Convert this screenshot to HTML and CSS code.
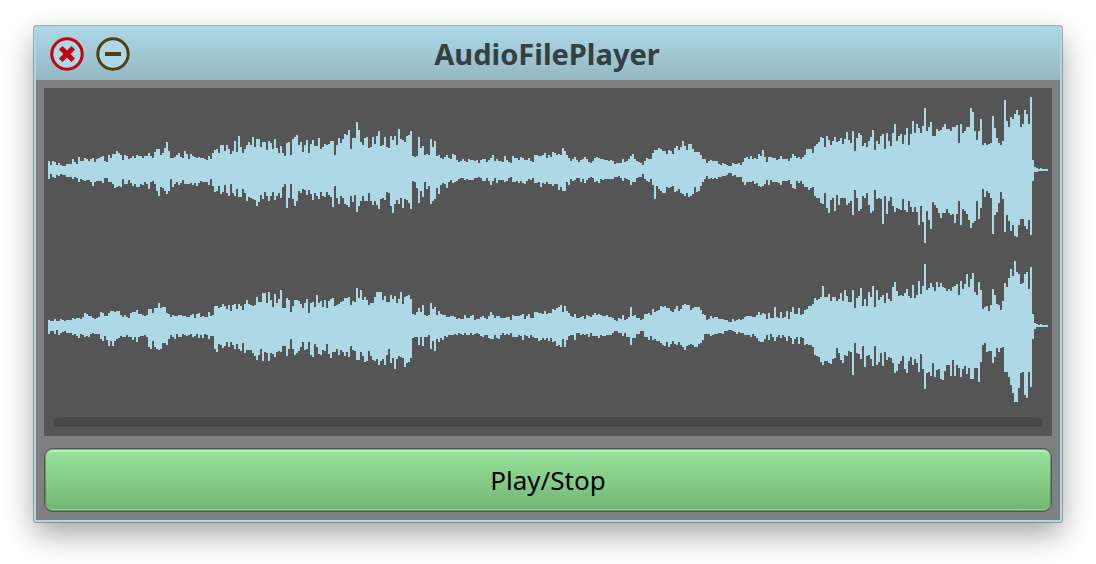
FILE: index.html
```
<!DOCTYPE html>
<html lang="en">
<head>
<meta charset="utf-8">
<title>AudioFilePlayer</title>
<link rel="stylesheet" href="styles.css">
</head>
<body>
<main class="window">
  <header class="titlebar">
    <div class="window-controls">
      <button class="control" type="button" aria-label="Close">
        <svg class="control-icon" viewBox="0 0 34 34" aria-hidden="true">
          <circle cx="17" cy="17" r="15.200" fill="#add8e6" stroke="#c4000f" stroke-width="3"/>
          <path d="M10.700 10.700L23.300 23.300M23.300 10.700L10.700 23.300" stroke="#c4000f" stroke-width="5"/>
        </svg>
      </button>
      <button class="control" type="button" aria-label="Minimise">
        <svg class="control-icon" viewBox="0 0 34 34" aria-hidden="true">
          <circle cx="17" cy="17" r="15.200" fill="#add8e6" stroke="#51400b" stroke-width="3"/>
          <path d="M9 17H25" stroke="#51400b" stroke-width="4"/>
        </svg>
      </button>
    </div>
    <h1 class="title">AudioFilePlayer</h1>
  </header>
  <div class="content">
    <section class="thumbnail" aria-label="Waveform">
      <svg class="channel" viewBox="0 0 1000 156" preserveAspectRatio="none" role="img" aria-label="Left channel"><path class="wave" id="left"/></svg>
      <svg class="channel" viewBox="0 0 1000 156" preserveAspectRatio="none" role="img" aria-label="Right channel"><path class="wave" id="right"/></svg>
      <div class="scrollbar"></div>
    </section>
    <button class="play" type="button">Play/Stop</button>
  </div>
</main>
<script src="waveform.js"></script>
</body>
</html>
```

FILE: styles.css
```
* {
  box-sizing: border-box;
}

body {
  min-height: 100vh;
  margin: 0;
  padding: 26px 34px;
  background: #fff;
  font-family: "Noto Sans", "Open Sans", sans-serif;
}

.window {
  border: 2px solid #add8e6;
  border-top: 0;
  border-radius: 2px;
  background: #808080;
  box-shadow: 0 0 0 1px rgba(0, 0, 0, 0.28), 0 12px 30px rgba(0, 0, 0, 0.36);
}

.titlebar {
  display: grid;
  grid-template-columns: 1fr auto 1fr;
  align-items: center;
  height: 54px;
  padding: 2px 16px 0 14px;
  background: linear-gradient(#add8e6, #93b8c3);
}

.window-controls {
  display: flex;
  gap: 12px;
}

.control {
  width: 34px;
  height: 34px;
  padding: 0;
  border: 0;
  background: none;
}

.control-icon {
  display: block;
  width: 100%;
  fill: none;
}

.title {
  margin: 0;
  color: #344144;
  font-size: 29px;
  font-weight: 700;
  line-height: 40px;
}

.content {
  display: flex;
  flex-direction: column;
  gap: 12px;
  padding: 8px;
}

.thumbnail {
  padding: 4px 4px 8px;
  background: #555;
}

.channel {
  display: block;
  width: 100%;
  height: 156px;
}

.wave {
  fill: #add8e6;
  shape-rendering: crispEdges;
}

.scrollbar {
  height: 12px;
  margin: 12px 4px 0;
  border: 1px solid #5b5b5b;
  border-radius: 6px;
  background: #494949;
}

.play {
  width: 100%;
  height: 64px;
  padding: 0;
  border: 1px solid #505650;
  border-radius: 9px;
  background: linear-gradient(#98e49c, #70b573);
  box-shadow: inset 0 0 0 1px rgba(70, 100, 70, 0.5), inset 0 3px 0 rgba(205, 245, 205, 0.65), inset 0 -2px 0 rgba(160, 225, 160, 0.7);
  color: #000;
  font-family: inherit;
  font-size: 26px;
  line-height: 36px;
}
```

FILE: waveform.js
```
// Peak heights above and below the centre line, two pixels per column.
// Each block starts at the matching column of BLOCK_STARTS.
const BLOCK_STARTS = [0, 126, 251, 376];
const CENTRE = 78;

const channels = {
  left: {
    up: [
      "9 5 9 8 5 7 5 4 4 6 6 6 11 8 6 13 9 9 12 11 9 11 12 8 11 12 13 14 9 8 15 12 16 16 19 17 15 10 15 14 11 12 14 12 15 14 14 12 14 14 17 14 12 18 21 21 15 17 22 28 19 12 12 13 15 17 13 12 19 16 11 16 14 13 12 13 12 12 11 10 14 11 17 20 21 17 25 25 19 25 21 16 19 29 18 34 23 17 21 25 28 25 33 23 31 31 23 28 28 20 29 27 21 31 22 17 24 17 14 27 28 15 31 33 35 25",
      "28 18 25 30 17 26 30 24 24 32 21 23 26 25 26 29 29 15 25 32 27 31 36 35 40 21 32 32 48 40 28 25 32 33 22 23 33 26 34 39 24 25 33 23 22 34 30 34 25 41 31 30 28 34 35 39 14 13 14 33 22 24 15 16 15 31 23 29 14 15 12 11 13 15 12 11 16 15 10 8 9 11 9 8 11 10 10 9 10 7 10 11 11 8 10 12 15 9 11 9 9 8 14 10 8 7 14 12 12 10 13 12 10 10 12 9 8 15 15 14 14 15 17 12 15",
      "13 18 17 15 16 15 22 19 15 12 9 11 13 10 8 10 11 13 11 8 7 9 12 13 12 11 11 10 10 9 10 9 6 7 7 7 11 8 9 11 14 16 11 9 8 7 5 9 12 11 11 17 20 20 22 21 19 19 16 20 19 16 22 24 20 23 29 24 20 26 26 21 18 18 18 15 11 11 7 9 10 9 9 9 6 5 7 6 5 4 4 7 6 6 7 5 8 12 13 11 14 11 12 11 16 14 20 13 8 13 13 12 12 10 11 14 11 11 11 9 12 16 14 12 13",
      "11 13 15 21 21 21 17 24 26 28 33 32 23 34 30 25 29 33 28 29 32 26 31 38 30 27 39 19 32 37 35 24 27 23 29 33 40 20 29 26 34 36 21 37 29 24 37 46 29 34 36 26 35 42 25 36 49 37 46 42 37 44 62 39 43 48 34 34 41 39 40 43 46 41 41 39 43 43 45 27 46 37 39 43 43 62 58 39 30 39 51 25 27 25 26 27 54 42 32 27 25 29 70 49 43 53 51 56 60 55 43 46 60 56 46 73 10 3 2 1 2 1 1 1"
    ],
    down: [
      "9 4 7 8 5 6 4 5 5 7 7 7 9 7 8 12 9 10 11 10 10 12 16 12 11 11 11 13 8 8 12 12 14 18 17 16 17 9 14 14 10 13 16 14 17 17 14 15 12 14 19 12 11 14 21 26 17 18 21 24 21 9 17 14 12 15 13 10 14 14 14 13 15 13 16 13 11 12 12 12 15 9 16 22 21 16 24 22 15 23 26 14 23 26 19 27 27 19 23 31 27 28 29 30 36 32 25 29 22 26 31 26 22 30 26 23 28 17 14 38 28 14 29 36 31 21",
      "23 19 20 25 20 24 30 23 26 29 22 26 27 22 25 27 37 16 28 34 26 28 34 35 37 26 32 25 42 36 31 26 31 31 23 31 35 31 35 39 29 28 30 22 23 36 43 34 30 34 28 38 29 30 33 39 11 12 18 33 21 27 12 19 16 34 31 29 18 24 15 13 14 18 12 10 13 12 11 9 8 8 10 9 10 10 10 8 8 7 8 11 11 8 11 15 11 8 13 10 10 10 12 11 8 7 12 12 11 13 11 13 14 11 9 10 8 13 13 12 17 13 14 12 14",
      "14 16 14 14 20 17 21 21 12 15 9 11 10 8 8 12 9 13 10 8 7 8 12 11 13 9 10 9 9 9 9 9 7 7 6 8 11 8 9 10 15 12 12 8 7 7 4 9 11 12 9 15 29 16 19 21 23 23 17 18 17 16 22 21 19 23 24 26 23 27 26 24 17 22 21 16 12 9 6 9 8 9 8 9 7 7 6 6 5 3 3 6 5 7 7 7 12 15 12 12 12 11 14 13 16 17 16 14 10 15 10 12 12 12 13 15 11 11 11 10 14 18 19 11 13",
      "11 14 17 17 20 18 17 26 28 28 33 34 23 38 43 30 28 41 25 35 28 28 28 35 33 31 45 20 28 41 39 26 28 23 35 43 41 20 29 28 29 54 26 44 31 27 36 42 38 39 40 29 40 42 31 37 42 37 42 55 36 52 73 41 50 59 32 35 38 43 48 43 43 39 43 45 44 53 44 31 55 39 41 44 50 58 53 51 31 49 38 19 27 21 23 28 64 45 42 33 22 29 62 45 51 61 55 66 67 55 49 49 56 59 50 65 11 2 2 1 1 1 1 1"
    ]
  },
  right: {
    up: [
      "6 5 5 7 5 5 7 6 5 6 6 6 8 7 8 8 7 9 13 12 10 10 8 7 8 9 14 13 10 10 13 15 15 14 15 15 11 9 11 9 8 13 14 14 16 12 12 11 10 11 17 17 13 18 18 23 18 19 19 13 12 9 11 10 10 11 11 10 10 9 9 11 12 8 12 13 9 10 9 9 14 10 11 20 20 18 19 22 20 17 21 15 21 22 17 22 20 16 22 26 22 21 20 21 29 24 24 33 33 23 34 26 19 32 23 27 36 18 18 28 26 14 20 26 26 25",
      "22 18 23 27 13 23 24 19 31 23 25 19 26 18 25 27 28 20 21 22 24 25 28 28 29 21 25 24 38 28 36 26 29 26 21 23 23 29 34 34 34 26 30 24 24 31 27 30 23 27 34 22 29 30 31 27 12 11 14 18 14 21 11 10 11 23 17 19 11 15 12 11 11 9 9 10 10 9 7 8 7 7 11 8 8 10 11 6 7 7 9 10 8 7 10 14 11 8 10 10 8 8 8 9 9 6 11 10 10 10 11 12 7 10 12 8 8 14 14 13 13 12 15 12 13",
      "13 17 16 18 19 21 14 20 15 13 10 9 12 8 8 9 10 7 11 10 9 11 13 11 12 11 10 10 11 9 9 8 6 5 8 7 11 6 7 9 19 10 11 8 8 6 7 12 12 13 11 17 14 15 16 20 19 20 18 18 15 14 17 20 15 17 21 22 21 21 16 18 19 19 19 16 12 11 6 7 10 8 9 9 7 7 7 6 6 4 4 7 5 6 7 6 7 9 10 10 10 9 9 11 14 11 13 12 7 13 8 8 19 9 8 14 8 9 15 7 14 19 12 12 18",
      "11 12 16 17 20 20 22 28 26 27 29 40 29 29 32 25 29 29 25 27 33 25 36 30 24 24 36 18 28 30 38 20 27 20 34 29 40 19 36 26 29 31 23 33 27 25 39 44 35 30 31 30 33 37 30 28 41 28 31 45 32 40 62 36 38 43 39 35 44 39 43 39 38 35 37 35 39 40 42 31 45 37 42 52 39 47 53 34 31 44 36 17 19 20 15 21 37 31 22 21 16 25 43 39 48 57 50 65 54 52 42 43 52 54 37 59 12 3 2 1 2 1 1 1"
    ],
    down: [
      "8 5 5 8 4 9 7 6 5 7 7 7 9 8 10 12 8 9 11 10 11 8 7 8 8 8 13 15 10 14 20 15 20 15 13 12 10 11 11 9 11 11 14 11 16 11 10 10 9 11 21 23 15 21 23 24 23 17 17 19 13 9 11 13 8 11 11 8 9 10 9 8 11 10 8 12 9 12 8 9 13 10 10 23 26 18 19 22 20 16 21 16 19 23 18 23 25 17 27 24 24 24 27 30 34 29 23 35 26 27 35 27 28 31 26 25 26 20 20 30 23 13 23 29 27 25",
      "21 16 24 23 16 29 31 18 21 28 29 24 25 18 28 32 26 26 23 29 24 26 30 26 31 20 24 25 34 34 26 30 36 35 25 30 34 35 33 39 35 33 39 29 23 37 32 43 33 30 31 32 41 37 36 32 12 11 11 19 11 20 11 11 9 23 15 25 13 16 12 14 10 11 9 9 9 8 9 7 8 9 7 9 9 7 9 8 7 8 10 11 9 9 12 13 13 9 12 13 9 7 9 8 9 7 11 11 11 9 10 14 9 10 12 9 11 12 12 15 14 12 14 12 15",
      "12 16 15 20 19 21 13 21 14 10 9 9 14 7 7 9 8 9 8 11 7 10 10 10 12 9 10 10 9 9 9 7 5 5 7 7 10 7 11 11 19 12 12 8 8 5 5 11 11 14 10 14 13 15 15 17 19 20 16 21 18 15 18 19 16 19 21 24 20 19 18 19 21 21 18 17 14 8 8 8 10 9 8 8 7 7 8 5 5 4 4 5 6 8 6 7 7 9 9 9 11 8 10 12 15 16 16 13 9 14 8 11 15 11 9 12 9 11 15 10 12 18 13 11 18",
      "11 12 19 18 19 19 21 29 30 31 36 39 35 35 37 38 33 32 22 27 34 37 29 30 25 26 49 17 27 28 33 20 41 30 29 33 40 20 39 36 27 40 26 34 31 32 37 47 45 38 35 30 43 47 35 31 39 33 37 46 28 43 63 47 46 50 37 51 44 43 53 54 45 39 39 50 34 50 39 42 51 43 40 48 42 53 53 42 42 56 36 19 17 26 25 25 37 31 22 26 22 21 46 46 51 59 67 76 76 62 47 46 69 72 46 61 13 3 1 1 1 1 1 1"
    ]
  }
};

for (const [id, { up, down }] of Object.entries(channels)) {
  let d = "";
  up.forEach((block, b) => {
    const tops = block.split(" ").map(Number);
    const bottoms = down[b].split(" ").map(Number);
    tops.forEach((top, i) => {
      const x = (BLOCK_STARTS[b] + i) * 2;
      d += `M${x} ${CENTRE - top}h2V${CENTRE + bottoms[i]}h-2z`;
    });
  });
  document.getElementById(id).setAttribute("d", d);
}
```
